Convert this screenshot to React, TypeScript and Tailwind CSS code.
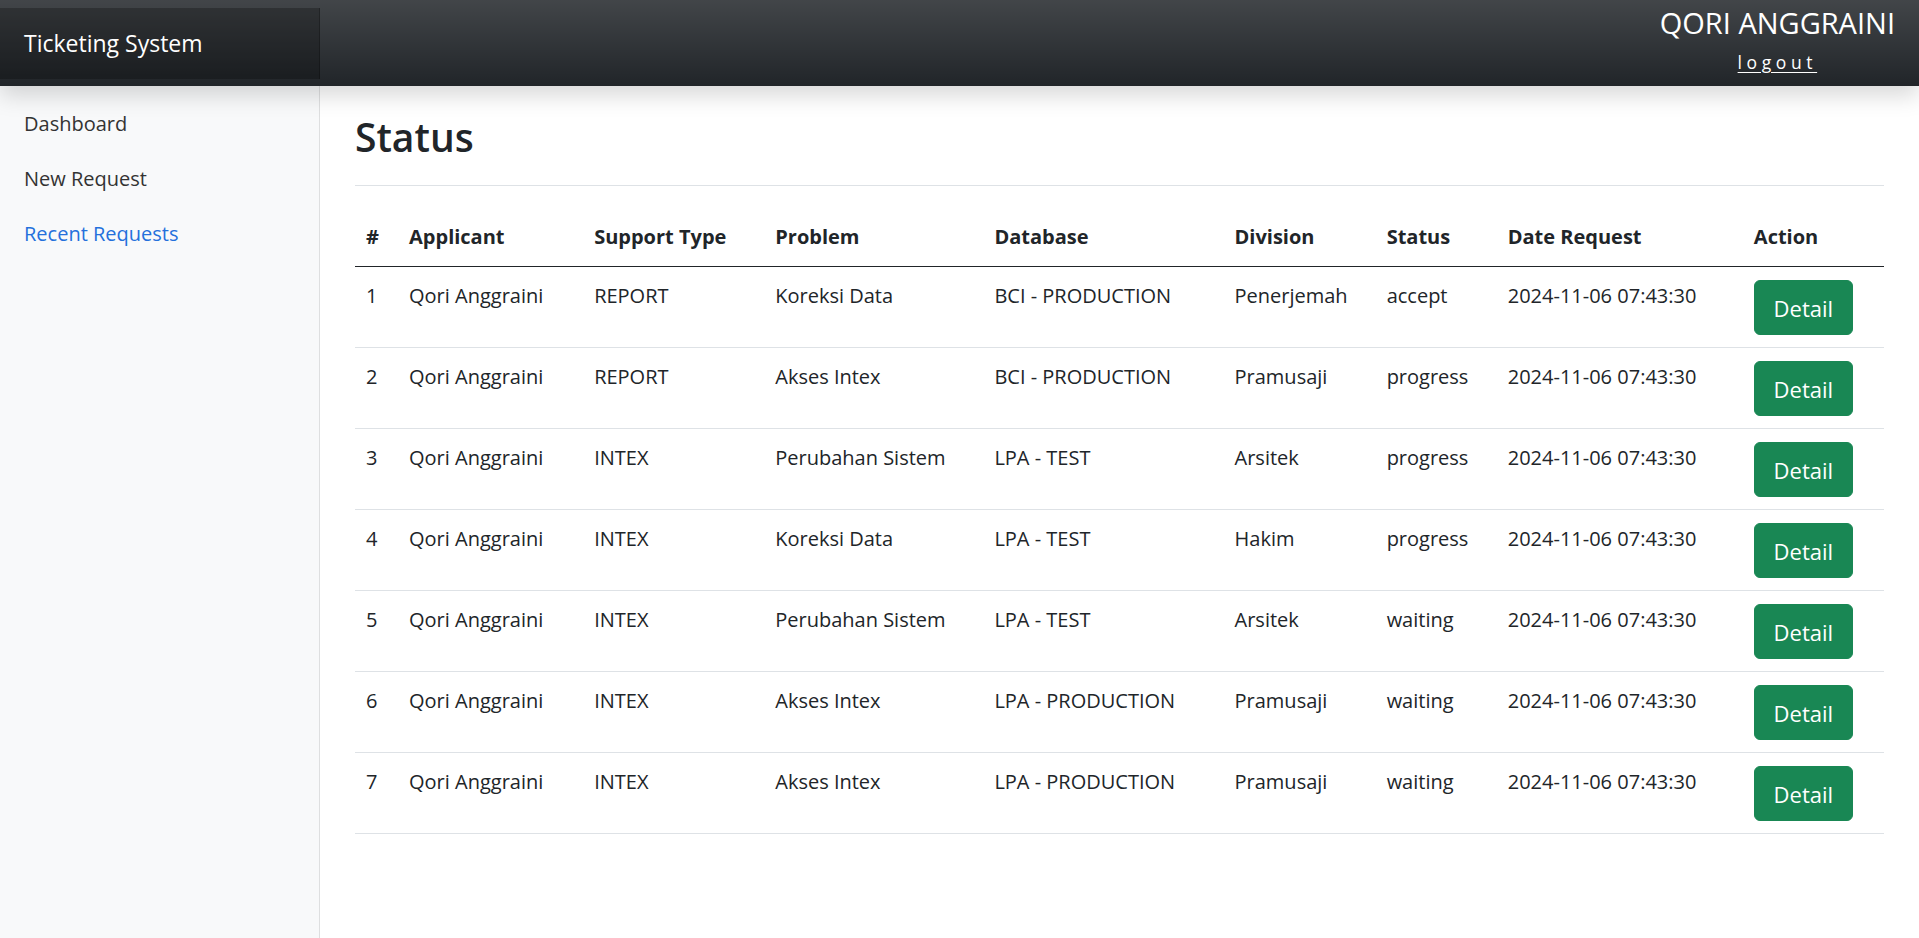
import React from "react";

type Ticket = {
  id: number;
  applicant: string;
  supportType: string;
  problem: string;
  database: string;
  division: string;
  status: string;
  dateRequest: string;
};

const tickets: Ticket[] = [
  { id: 1, applicant: "Qori Anggraini", supportType: "REPORT", problem: "Koreksi Data", database: "BCI - PRODUCTION", division: "Penerjemah", status: "accept", dateRequest: "2024-11-06 07:43:30" },
  { id: 2, applicant: "Qori Anggraini", supportType: "REPORT", problem: "Akses Intex", database: "BCI - PRODUCTION", division: "Pramusaji", status: "progress", dateRequest: "2024-11-06 07:43:30" },
  { id: 3, applicant: "Qori Anggraini", supportType: "INTEX", problem: "Perubahan Sistem", database: "LPA - TEST", division: "Arsitek", status: "progress", dateRequest: "2024-11-06 07:43:30" },
  { id: 4, applicant: "Qori Anggraini", supportType: "INTEX", problem: "Koreksi Data", database: "LPA - TEST", division: "Hakim", status: "progress", dateRequest: "2024-11-06 07:43:30" },
  { id: 5, applicant: "Qori Anggraini", supportType: "INTEX", problem: "Perubahan Sistem", database: "LPA - TEST", division: "Arsitek", status: "waiting", dateRequest: "2024-11-06 07:43:30" },
  { id: 6, applicant: "Qori Anggraini", supportType: "INTEX", problem: "Akses Intex", database: "LPA - PRODUCTION", division: "Pramusaji", status: "waiting", dateRequest: "2024-11-06 07:43:30" },
  { id: 7, applicant: "Qori Anggraini", supportType: "INTEX", problem: "Akses Intex", database: "LPA - PRODUCTION", division: "Pramusaji", status: "waiting", dateRequest: "2024-11-06 07:43:30" },
];

const columns = [
  { label: "#", width: "w-[43px]" },
  { label: "Applicant", width: "w-[185px]" },
  { label: "Support Type", width: "w-[181px]" },
  { label: "Problem", width: "w-[219px]" },
  { label: "Database", width: "w-[240px]" },
  { label: "Division", width: "w-[152px]" },
  { label: "Status", width: "w-[121px]" },
  { label: "Date Request", width: "w-[246px]" },
  { label: "Action", width: "w-[141px]" },
];

const navItems = [
  { label: "Dashboard", active: false },
  { label: "New Request", active: false },
  { label: "Recent Requests", active: true },
];

const Header = () => {
  return (
    <header className="relative z-10 flex h-[86px] items-center justify-between bg-[#212529] bg-[linear-gradient(180deg,rgba(255,255,255,0.15),rgba(255,255,255,0))] shadow-[0_10px_21px_rgba(0,0,0,0.15)]">
      <a
        href="#"
        className="flex h-[71px] w-[320px] items-center bg-black/25 px-6 text-[23px] text-white shadow-[inset_-1px_0_0_rgba(0,0,0,0.25)]"
      >
        Ticketing System
      </a>
      <div className="flex flex-col items-center self-start pr-6 pt-[4px] text-white">
        <span className="text-[29px] leading-[37px]">QORI ANGGRAINI</span>
        <a
          href="#"
          className="mt-[7px] text-[17.5px] leading-[28px] tracking-[4.6px] underline underline-offset-[3px]"
        >
          logout
        </a>
      </div>
    </header>
  );
};

const Sidebar = () => {
  return (
    <aside className="w-[320px] shrink-0 bg-[#f8f9fa] pt-[10px] shadow-[inset_-1px_0_0_rgba(0,0,0,0.1)]">
      <ul className="flex flex-col">
        {navItems.map((item) => (
          <li key={item.label}>
            <a
              href="#"
              className={`block px-6 py-[11.5px] text-[20px] font-medium leading-8 ${
                item.active ? "text-[#2470dc]" : "text-[#333333]"
              }`}
            >
              {item.label}
            </a>
          </li>
        ))}
      </ul>
    </aside>
  );
};

const App = () => {
  return (
    <div
      className="flex min-h-screen flex-col bg-white text-[#212529]"
      style={{ fontFamily: '"Open Sans", "Noto Sans", Arial, sans-serif' }}
    >
      <Header />
      <div className="flex flex-1">
        <Sidebar />
        <main className="flex-1 px-[35px]">
          <div className="mb-[22px] border-b border-[#dee2e6] pb-[24px] pt-[27px]">
            <h1 className="text-[39px] font-semibold leading-[48px]">Status</h1>
          </div>
          <table className="w-full table-fixed border-collapse text-left text-[20px] leading-8">
            <colgroup>
              {columns.map((col) => (
                <col key={col.label} className={col.width} />
              ))}
            </colgroup>
            <thead>
              <tr className="border-b border-[#212529]">
                {columns.map((col) => (
                  <th key={col.label} className="px-[11px] pb-[13px] pt-[13px] font-bold">
                    {col.label}
                  </th>
                ))}
              </tr>
            </thead>
            <tbody>
              {tickets.map((ticket) => (
                <tr key={ticket.id} className="border-b border-[#dee2e6] align-top">
                  <td className="px-[11px] pb-[12px] pt-[13px]">{ticket.id}</td>
                  <td className="px-[11px] pb-[12px] pt-[13px]">{ticket.applicant}</td>
                  <td className="px-[11px] pb-[12px] pt-[13px]">{ticket.supportType}</td>
                  <td className="px-[11px] pb-[12px] pt-[13px]">{ticket.problem}</td>
                  <td className="px-[11px] pb-[12px] pt-[13px]">{ticket.database}</td>
                  <td className="px-[11px] pb-[12px] pt-[13px]">{ticket.division}</td>
                  <td className="px-[11px] pb-[12px] pt-[13px]">{ticket.status}</td>
                  <td className="whitespace-nowrap px-[11px] pb-[12px] pt-[13px]">{ticket.dateRequest}</td>
                  <td className="px-[11px] pb-[12px] pt-[13px]">
                    <button className="h-[55px] w-[99px] rounded-[6px] border border-[#198754] bg-[#198754] text-[22px] text-white hover:bg-[#157347]">
                      Detail
                    </button>
                  </td>
                </tr>
              ))}
            </tbody>
          </table>
        </main>
      </div>
    </div>
  );
};

export default App;
